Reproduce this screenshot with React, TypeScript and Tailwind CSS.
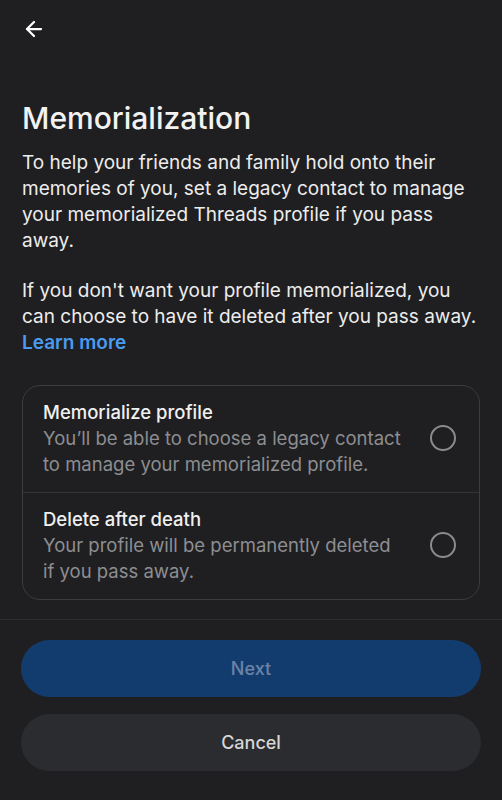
import { ArrowLeft } from 'lucide-react';

const options = [
  {
    id: 'memorialize',
    title: 'Memorialize profile',
    desc: 'You’ll be able to choose a legacy contact to manage your memorialized profile.',
  },
  {
    id: 'delete',
    title: 'Delete after death',
    desc: 'Your profile will be permanently deleted if you pass away.',
  },
];

export default function App() {
  return (
    <div
      className="w-[502px] h-[800px] bg-[#1f1f21] text-white flex flex-col overflow-hidden"
      style={{ fontFamily: 'Inter, "Noto Sans", sans-serif' }}
    >
      {/* Header */}
      <div className="h-[58px] px-[22px] flex items-center">
        <ArrowLeft size={24} strokeWidth={2.25} className="text-white" />
      </div>

      {/* Content */}
      <div className="flex-1 px-[22px] pt-[42px]">
        <h1 className="text-[30px] font-medium leading-[36px] text-[#f2f2f2]">
          Memorialization
        </h1>
        <p className="mt-[14px] text-[19px] leading-[26px] text-[#ededed]">
          To help your friends and family hold onto their memories of you, set a legacy contact
          to manage your memorialized Threads profile if you pass away.
        </p>
        <p className="mt-[24px] text-[19px] leading-[26px] text-[#ededed]">
          If you don't want your profile memorialized, you can choose to have it deleted after
          you pass away.
          <br />
          <span className="font-semibold text-[#4a9bf0]">Learn more</span>
        </p>

        {/* Options */}
        <div className="mt-[29px] border border-[#3b3c40] rounded-[18px] overflow-hidden">
          {options.map((opt, i) => (
            <div
              key={opt.id}
              className={`flex items-center justify-between pl-[20px] pr-[23px] pt-[13px] pb-[15px] ${
                i > 0 ? 'border-t border-[#333438]' : ''
              }`}
            >
              <div className="w-[361px]">
                <p className="text-[18.5px] leading-[26px] font-medium text-[#f0f0f0]">{opt.title}</p>
                <p className="text-[18.5px] leading-[26px] text-[#8d8e92]">{opt.desc}</p>
              </div>
              <span className="w-[26px] h-[26px] rounded-full border-2 border-[#8a8b8f] shrink-0" />
            </div>
          ))}
        </div>
      </div>

      {/* Footer */}
      <div className="border-t border-[#2e2f33] px-[21px] pt-[20px] pb-[29px] flex flex-col gap-[17px]">
        <button className="h-[57px] rounded-full bg-[#133c6e] text-[18px] font-medium text-[#6c83a6]">
          Next
        </button>
        <button className="h-[57px] rounded-full bg-[#2b2c30] text-[18px] font-medium text-[#d6d6d6]">
          Cancel
        </button>
      </div>
    </div>
  );
}
